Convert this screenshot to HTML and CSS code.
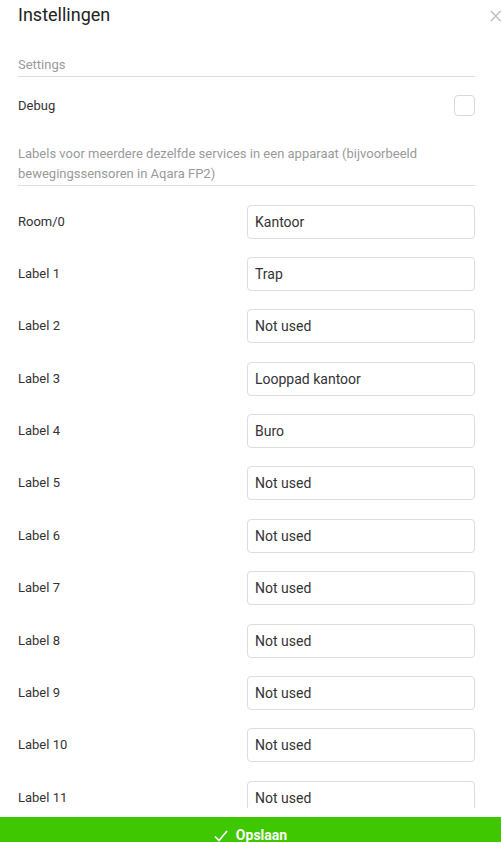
FILE: index.html
```html
<!DOCTYPE html>
<html lang="nl">
<head>
<meta charset="utf-8">
<title>Instellingen</title>
<link rel="stylesheet" href="styles.css">
</head>
<body>
<div class="page">
  <div class="scroll">
    <header class="header">
      <h1 class="title">Instellingen</h1>
      <svg class="close" width="11" height="12" viewBox="0 0 11 12"><path d="M1 1 L10.5 11 M10.5 1 L1 11" stroke="#bdbdbd" stroke-width="1.4" fill="none"/></svg>
    </header>
    <div class="section-title">Settings</div>
    <div class="check-row">
      <span class="label">Debug</span>
      <span class="checkbox"></span>
    </div>
    <div class="section-title desc">Labels voor meerdere dezelfde services in een apparaat (bijvoorbeeld bewegingssensoren in Aqara FP2)</div>
    <div class="rows">
      <div class="row"><span class="label">Room/0</span><input class="field" value="Kantoor"></div>
      <div class="row"><span class="label">Label 1</span><input class="field" value="Trap"></div>
      <div class="row"><span class="label">Label 2</span><input class="field" value="Not used"></div>
      <div class="row"><span class="label">Label 3</span><input class="field" value="Looppad kantoor"></div>
      <div class="row"><span class="label">Label 4</span><input class="field" value="Buro"></div>
      <div class="row"><span class="label">Label 5</span><input class="field" value="Not used"></div>
      <div class="row"><span class="label">Label 6</span><input class="field" value="Not used"></div>
      <div class="row"><span class="label">Label 7</span><input class="field" value="Not used"></div>
      <div class="row"><span class="label">Label 8</span><input class="field" value="Not used"></div>
      <div class="row"><span class="label">Label 9</span><input class="field" value="Not used"></div>
      <div class="row"><span class="label">Label 10</span><input class="field" value="Not used"></div>
      <div class="row"><span class="label">Label 11</span><input class="field" value="Not used"></div>
    </div>
  </div>
  <button class="save"><svg class="tick" width="14" height="12" viewBox="0 0 14 12"><path d="M1 6.5 L5 10.5 L13 1" stroke="#fff" stroke-width="1.6" fill="none"/></svg>Opslaan</button>
</div>
</body>
</html>
```
FILE: styles.css
```css
* { box-sizing: border-box; }
html, body { margin: 0; padding: 0; background: #fff; }
body {
  font-family: Roboto, "Liberation Sans", Arial, sans-serif;
  color: #333;
  height: 842px;
  overflow: hidden;
}
.page {
  display: flex;
  flex-direction: column;
}
.scroll {
  height: 808px;
  overflow: hidden;
  padding: 0 26px 0 18px;
}
.header {
  display: flex;
  justify-content: space-between;
  align-items: flex-start;
  margin-right: -26px;
}
.title {
  margin: 0;
  font-size: 18px;
  font-weight: 400;
  line-height: 30px;
  color: #222;
}
.close { margin-top: 10px; }
.section-title {
  margin-top: 25px;
  font-size: 13px;
  line-height: 20px;
  color: #9a9a9a;
  padding-bottom: 1px;
  border-bottom: 1px solid #dcdce2;
}
.desc { margin-top: 28px; }
.check-row {
  margin-top: 18px;
  display: flex;
  justify-content: space-between;
  align-items: center;
  height: 21px;
}
.label {
  font-size: 13px;
  line-height: 20px;
  color: #333;
}
.checkbox {
  width: 21px;
  height: 21px;
  border: 1px solid #d8d8de;
  border-radius: 4px;
}
.rows {
  margin-top: 18.5px;
  display: flex;
  flex-direction: column;
  gap: 18.4px;
}
.row {
  display: flex;
  justify-content: space-between;
  align-items: center;
}
.field {
  width: 228px;
  height: 34px;
  border: 1px solid #dcdce2;
  border-radius: 4px;
  padding: 0 7px;
  font-family: Roboto, "Liberation Sans", Arial, sans-serif;
  font-size: 14px;
  color: #333;
  background: #fff;
  outline: none;
}
.save {
  margin-top: 9px;
  height: 36px;
  border: 0;
  background: #3fc800;
  color: #fff;
  font-family: Roboto, "Liberation Sans", Arial, sans-serif;
  font-size: 14px;
  font-weight: 700;
  display: flex;
  align-items: center;
  justify-content: center;
  gap: 8px;
  flex-shrink: 0;
}
.tick { margin-top: 2px; }
```
